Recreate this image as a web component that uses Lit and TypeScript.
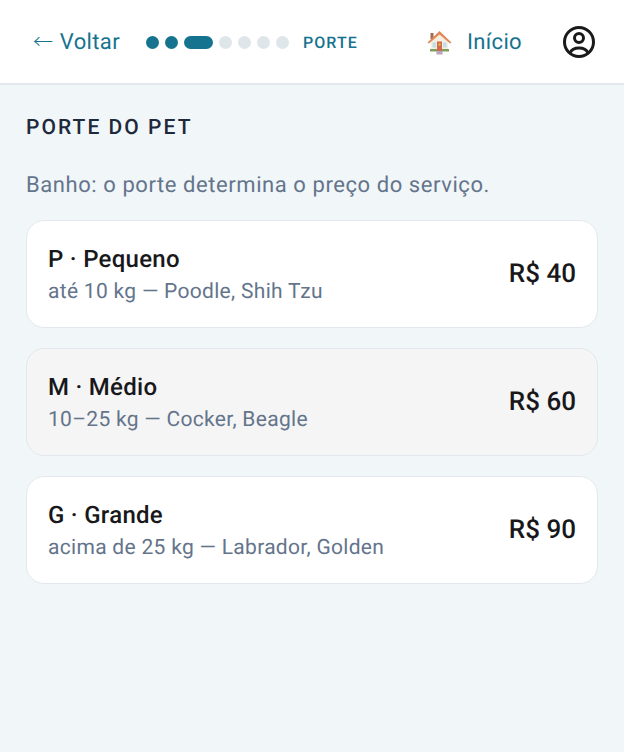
import { LitElement, html, css } from "lit";
import { customElement } from "lit/decorators.js";

const sizes = [
  { t: "P · Pequeno", d: "até 10 kg — Poodle, Shih Tzu", p: "R$ 40", h: false },
  { t: "M · Médio", d: "10–25 kg — Cocker, Beagle", p: "R$ 60", h: true },
  { t: "G · Grande", d: "acima de 25 kg — Labrador, Golden", p: "R$ 90", h: false },
];

@customElement("app-root")
export class AppRoot extends LitElement {
  static styles = css`
    :host { display: block; min-height: 752px; background: #f1f6f9; font-family: Roboto, sans-serif; text-rendering: geometricPrecision; }
    .top { height: 85px; box-sizing: border-box; padding: 1px 28px 0 32px; background: #fff; border-bottom: 2px solid #e2e8ee; display: flex; align-items: center; }
    .back { font-size: 22px; line-height: 26px; color: #15738f; letter-spacing: 0.35px; white-space: nowrap; }
    .arrow { font-family: "Noto Sans CJK SC", sans-serif; font-size: 20px; font-weight: 300; letter-spacing: 0; padding: 0 1px; }
    .steps { display: flex; align-items: center; gap: 6px; margin-left: 26px; }
    .dot { width: 13px; height: 13px; border-radius: 7px; background: #dfe6ea; }
    .dot.done { background: #15738f; }
    .dot.cur { width: 29px; background: #15738f; }
    .label { margin-left: 14px; font-size: 16px; font-weight: 500; letter-spacing: 1.1px; color: #15738f; }
    .spacer { flex: 1; }
    .house { width: 27px; height: 27px; display: block; }
    .home { margin-left: 14px; font-size: 22px; color: #15738f; letter-spacing: 0.35px; }
    .user { width: 34px; height: 34px; display: block; margin-left: 40px; }
    main { padding: 30px 26px 0; }
    h1 { margin: 0; font-size: 21px; line-height: 26px; font-weight: 500; letter-spacing: 2.05px; color: #1e293b; }
    .intro { margin: 32px 0 0; font-size: 22px; line-height: 26px; color: #64748b; letter-spacing: 0.57px; }
    .list { display: flex; flex-direction: column; gap: 20px; margin-top: 21px; }
    .card { height: 108px; box-sizing: border-box; background: #fff; border: 1.5px solid #e2e8ee; border-radius: 18px; padding: 0 21px; display: flex; align-items: center; justify-content: space-between; }
    .card.h { background: #f5f5f5; }
    .info { padding-top: 1px; }
    .t { font-size: 24px; line-height: 30px; font-weight: 500; color: #18181b; letter-spacing: 0.28px; }
    .d { font-size: 21px; line-height: 26px; margin-top: 5px; color: #64748b; letter-spacing: 0.3px; }
    .p { font-size: 26px; font-weight: 500; color: #18181b; }
  `;

  render() {
    return html`
      <header class="top">
        <span class="back"><span class="arrow">←</span> Voltar</span>
        <div class="steps">
          <i class="dot done"></i><i class="dot done"></i><i class="dot cur"></i>
          <i class="dot"></i><i class="dot"></i><i class="dot"></i><i class="dot"></i>
        </div>
        <span class="label">PORTE</span>
        <span class="spacer"></span>
        <svg class="house" viewBox="0 0 27 27">
          <rect x="4.500" y="4" width="3" height="6" fill="#a5694f"/>
          <path d="M5 12L13.5 4 22 12v10H5z" fill="#f6eee0"/>
          <path d="M1.500 13.500L13.500 2 25.500 13.500l-1.500 1L13.500 5.500 3 14.500z" fill="#e0895a"/>
          <rect x="6.500" y="13.500" width="3.500" height="5" fill="#bfe0ea"/>
          <rect x="17" y="13.500" width="3.500" height="5" fill="#bfe0ea"/>
          <rect x="11" y="12.500" width="5" height="9.500" fill="#d2694a"/>
          <circle cx="13.500" cy="15.500" r="1.300" fill="#e8b24a"/>
          <rect x="4" y="20" width="7" height="2.500" fill="#7f9f5f"/>
          <rect x="16" y="20" width="7" height="2.500" fill="#7f9f5f"/>
          <rect x="10.500" y="22" width="6" height="3.500" fill="#b7a5c0"/>
        </svg>
        <span class="home">Início</span>
        <svg class="user" viewBox="0 0 34 34" fill="none" stroke="#1a1a1a" stroke-width="3">
          <circle cx="17" cy="17" r="14.500"/>
          <circle cx="17" cy="13" r="4.500"/>
          <path d="M8 28c1.500-3.500 5-5 9-5s7.500 1.500 9 5"/>
        </svg>
      </header>
      <main>
        <h1>PORTE DO PET</h1>
        <p class="intro">Banho: o porte determina o preço do serviço.</p>
        <div class="list">
          ${sizes.map(
            (s) => html`<div class="card ${s.h ? "h" : ""}">
              <div class="info"><div class="t">${s.t}</div><div class="d">${s.d}</div></div>
              <div class="p">${s.p}</div>
            </div>`
          )}
        </div>
      </main>
    `;
  }
}
